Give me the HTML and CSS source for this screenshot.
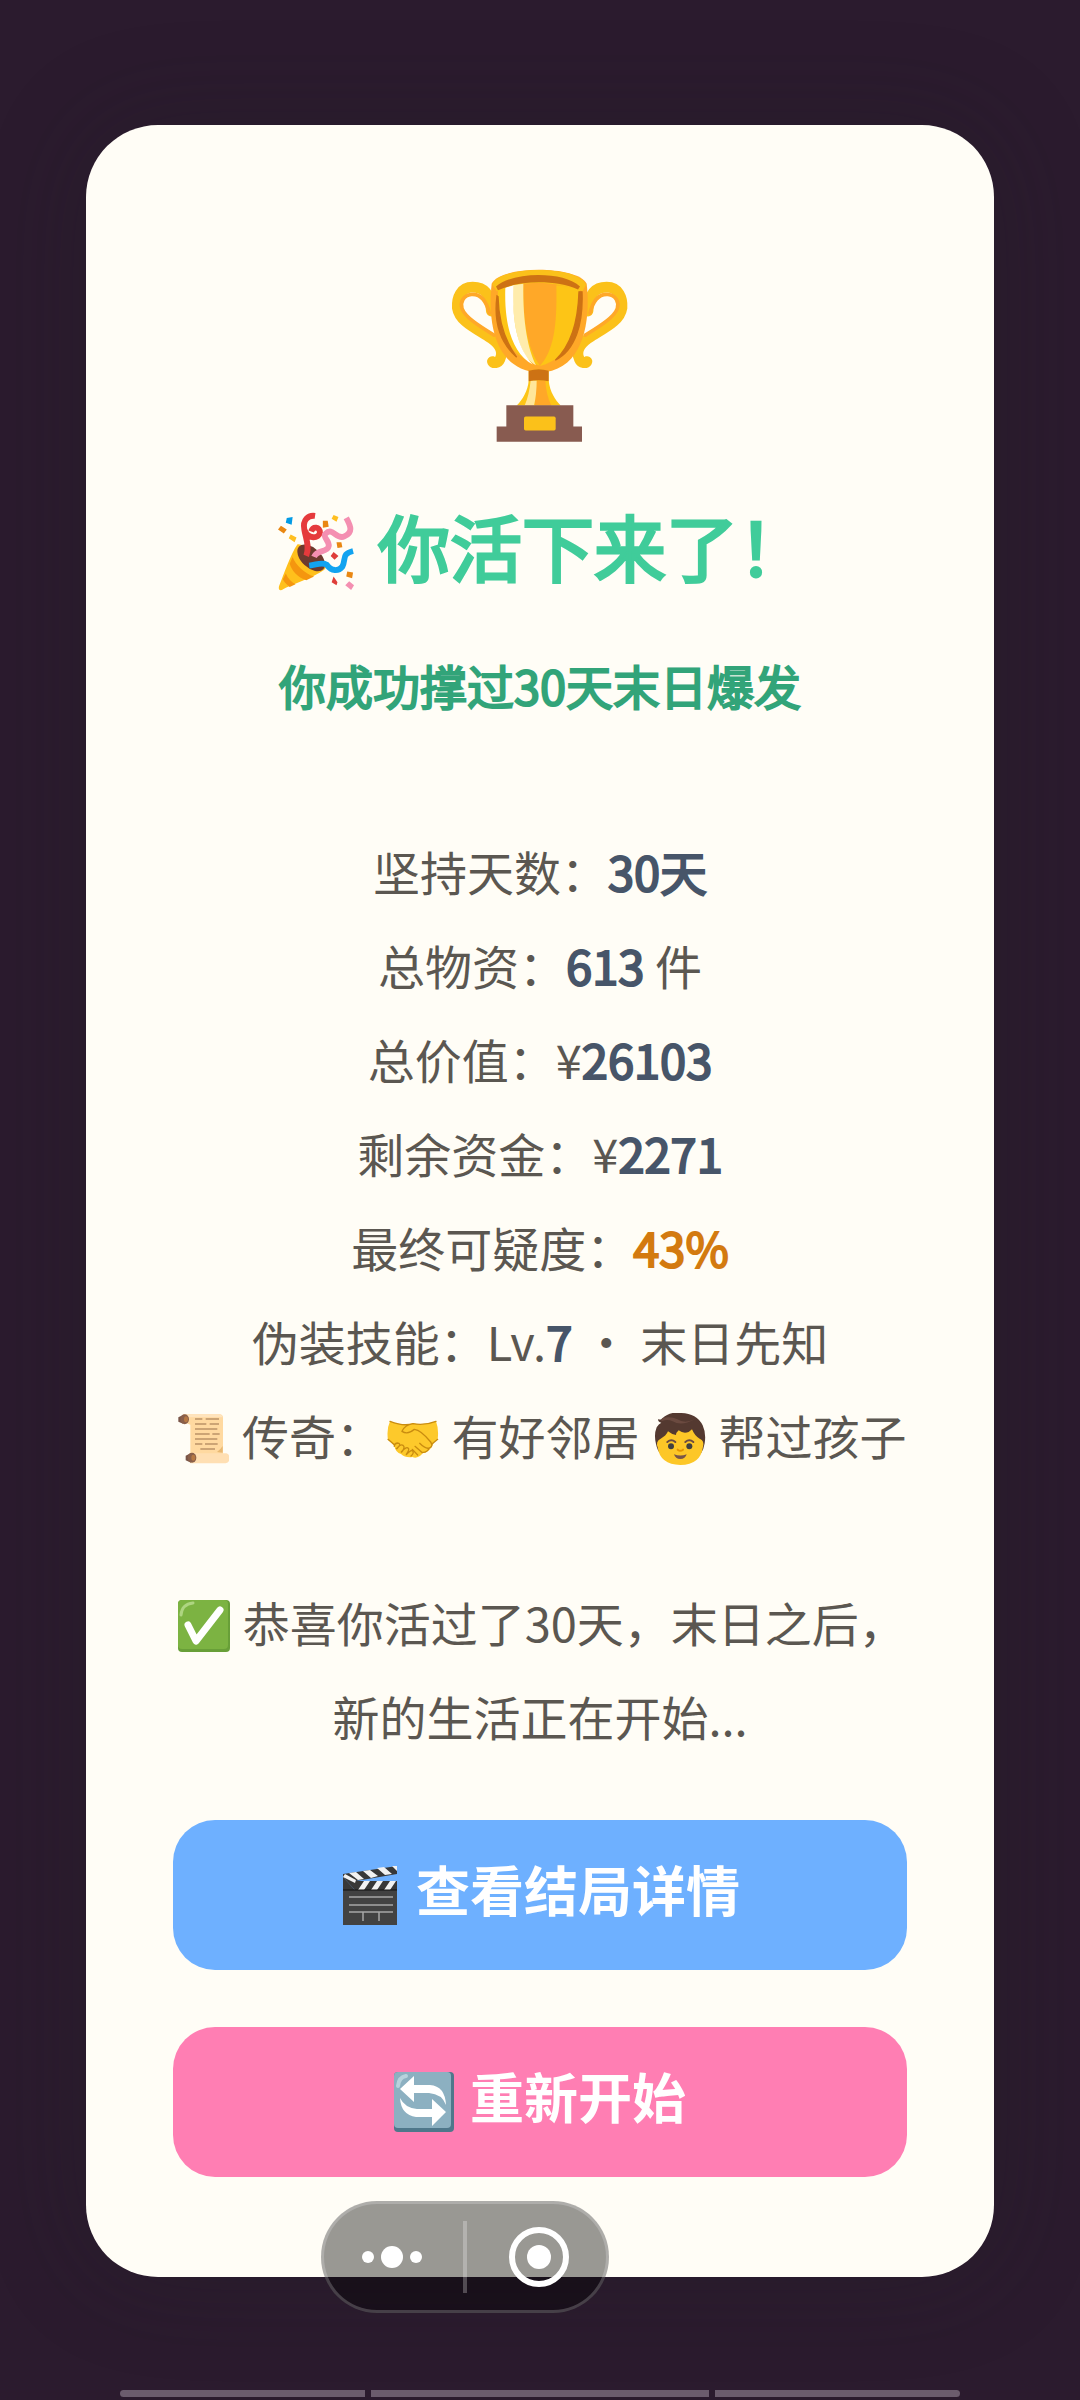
FILE: index.html
```html
<!DOCTYPE html>
<html lang="zh-CN">
<head>
    <meta charset="UTF-8">
    <meta name="viewport" content="width=device-width, initial-scale=1.0">
    <title>你活下来了！</title>
    <link rel="stylesheet" href="styles.css">
</head>
<body>

    <main class="card">
        <!-- 奖杯 -->
        <svg class="trophy" viewBox="150 80 540 530" aria-hidden="true">
            <g fill="none" stroke-linecap="round">
                <path d="M274 212C272 160 252 140 218 140C182 140 170 172 172 202C178 240 220 260 262 286C296 306 312 332 300 356C294 370 280 368 277 363" stroke="#fbc11a" stroke-width="32"/>
                <path d="M564 212C566 160 586 140 620 140C656 140 668 172 666 202C660 240 618 260 576 286C542 306 526 332 538 356C544 370 558 368 561 363" stroke="#fbc11a" stroke-width="32"/>
                <path d="M268 218C258 178 238 160 214 162C190 164 180 186 186 204C196 232 244 260 282 284" stroke="#ffa828" stroke-width="11"/>
                <path d="M570 218C580 178 600 160 624 162C648 164 658 186 652 204C642 232 594 260 556 284" stroke="#ffa828" stroke-width="11"/>
            </g>
            <path d="M275 130C300 74 532 74 560 130C572 230 556 394 416 396C276 388 264 230 275 130Z" fill="#ffa828"/>
            <path d="M277 132C300 74 532 74 558 132L548 152C470 122 360 122 290 152Z" fill="#fbc11a"/>
            <path d="M294 146C345 128 480 126 540 148C546 270 510 350 422 376C326 350 288 270 294 146Z" fill="#fdc516"/>
            <path d="M370 130C400 126 440 126 469 132C472 260 460 330 420 376C385 330 368 250 370 130Z" fill="#ffa828"/>
            <path d="M338 134L370 130C368 250 385 330 408 374C360 350 336 260 338 134Z" fill="#ffecac"/>
            <path d="M316 142L340 134C336 250 352 320 398 372C340 340 312 260 316 142Z" fill="#fff"/>
            <path d="M288 138C340 92 492 92 540 138L534 147C470 118 360 118 294 149Z" fill="#cd7214"/>
            <path d="M291 166C280 250 304 310 350 350C322 312 296 256 294 168ZM537 154L546 154C550 250 526 330 466 359C510 318 534 250 537 154Z" fill="#cd7214" stroke="#cd7214" stroke-width="4"/>
            <path d="M386 392Q416 380 446 392L446 420C450 456 466 478 482 495H350C368 478 384 450 386 420Z" fill="#fdc516"/>
            <path d="M410 420H436Q438 462 454 495H404Z" fill="#ffa828"/>
            <path d="M392 420H410Q410 462 402 495H374Q388 462 392 420Z" fill="#ffe69a"/>
            <path d="M386 391Q416 381 446 391V422Q416 416 386 422Z" fill="#cd7214"/>
            <path d="M319 494H520V558H546V604H290V558H319Z" fill="#885b50"/>
            <rect x="372" y="528" width="95" height="42" rx="5" fill="#fbc11a"/>
        </svg>

        <h1 class="title">
            <svg class="popper" viewBox="0 0 80 80" aria-hidden="true">
                <path d="M20 32C28 31 50 49 49 56C48 62 12 74 4 79Q0 80 1 75C6 63 13 42 20 32Z" fill="#ffc01c"/>
                <path d="M15 45C18 53 27 62 37 65L29 69C20 66 14 59 12 52ZM8 62C10 67 14 71 18 73L12 76C8 73 6 70 5 68Z" fill="#f5960f"/>
                <ellipse cx="34" cy="46" rx="17" ry="10" transform="rotate(43 34 46)" fill="#6d3a2e"/>
                <path d="M29 44C33 34 28 25 27 17C25 7 31 2 38 3M27 17C31 28 42 26 43 20C43 14 36 13 34 19" fill="none" stroke="#e53a3c" stroke-width="6"/>
                <path d="M37 45C40 37 51 41 52 34C53 28 45 25 49 21C56 14 60 28 68 24C77 20 75 14 70 5" fill="none" stroke="#f48fb1" stroke-width="6"/>
                <path d="M32 54C40 53 45 50 50 53C55 60 62 60 66 55C70 47 65 42 77 39" fill="none" stroke="#12a3f0" stroke-width="6"/>
                <path d="M9 5L15 4L14 12L8 10Z" fill="#039be5"/>
                <path d="M3 13L9 17L6 21L0 17ZM46 8L51 8L52 14L46 15ZM60 30L65 30L66 35L61 36ZM71 60L77 61L76 67L70 65Z" fill="#e98712"/>
                <path d="M13 22L19 25L17 30L11 26ZM57 2L62 4L60 9L55 6Z" fill="#ffbf20"/>
                <path d="M57 40L62 44L58 48L54 44ZM57 65L61 71L60 74L55 71Z" fill="#df3e39"/>
                <path d="M73 70L78 74L75 79L69 74Z" fill="#f48fb1"/>
            </svg>
            你活下来了！
        </h1>

        <p class="subtitle">你成功撑过30天末日爆发</p>

        <div class="stats">
            <p>坚持天数：<strong>30天</strong></p>
            <p>总物资：<strong>613</strong> 件</p>
            <p>总价值：¥<strong>26103</strong></p>
            <p>剩余资金：¥<strong>2271</strong></p>
            <p>最终可疑度：<strong class="warn">43%</strong></p>
            <p>伪装技能：Lv.<strong>7</strong> ・ 末日先知</p>
            <p>
                <svg class="emoji" viewBox="50 53 156 156" aria-hidden="true">
                    <path d="M68 57H178Q188 57 188 68V176H90V88Q82 84 68 84Z" fill="#ffd9a0"/>
                    <path d="M78 57H176Q186 58 186 66H84Z" fill="#ffe4bd"/>
                    <path d="M86 174H198Q208 176 208 189Q207 203 196 204H90Z" fill="#ffdfb3"/>
                    <path d="M170 170Q180 163 187 152V172Z" fill="#e8b873"/>
                    <path d="M104 71H126M136 71H176M104 86H138M148 86H176M104 101H171M104 116H148M156 116H178M104 131H171M104 146H126M134 146H172M120 161H164" stroke="#bc9267" stroke-width="4"/>
                    <path d="M54 66L68 59V85L54 79Z" fill="#795548"/>
                    <ellipse cx="73" cy="72" rx="13" ry="15" fill="#8a5f49"/>
                    <ellipse cx="77" cy="72" rx="6" ry="9" fill="#b67843"/>
                    <path d="M76 181L92 173V202L76 195Z" fill="#795548"/>
                    <ellipse cx="95" cy="187" rx="13" ry="15" fill="#8a5f49"/>
                    <ellipse cx="99" cy="187" rx="6" ry="9" fill="#b67843"/>
                </svg>
                传奇：<svg class="emoji" viewBox="20 51 156 156" aria-hidden="true">
                    <path d="M29 76Q70 92 98 82Q130 90 167 76Q176 100 172 130Q160 136 155 151Q145 170 127 172Q112 190 96 183Q75 186 62 174Q46 170 42 150Q34 140 23 132Q18 100 29 76Z" fill="#fdc92b"/>
                    <g fill="none" stroke="#c98c10" stroke-width="4" stroke-linecap="round">
                        <path d="M29 76Q70 92 98 83Q130 90 167 76M98 83Q72 88 65 106Q82 118 102 100Q122 102 151 138Q160 151 147 156Q136 160 118 142M104 151L126 170M96 160L112 177M147 156Q140 170 127 169"/>
                        <path d="M42 151Q41 143 51 141Q62 142 56 151L48 158M50 158Q61 143 68 148Q76 154 64 168M63 168Q78 150 84 157Q88 161 78 175M78 176Q94 158 98 166Q101 172 92 180M23 130L42 146M172 130L155 144"/>
                    </g>
                </svg>
                有好邻居
                <svg class="emoji" viewBox="38 51 156 156" aria-hidden="true">
                    <path d="M50 69Q56 73 62 68Q85 46 115 51Q165 50 184 88Q195 112 190 142Q187 162 178 174H58Q48 164 44 144Q37 116 46 94Q52 84 60 80Q50 79 50 69Z" fill="#543930"/>
                    <path d="M62 66Q90 60 108 70Q130 84 160 70Q120 92 94 76Q78 68 60 76Z" fill="#6b4a40"/>
                    <path d="M58 128Q74 120 80 106Q92 116 104 117Q104 110 112 103Q126 114 142 108L152 100Q160 120 175 128Q190 134 185 152Q178 206 117 207Q56 206 49 154Q42 136 58 128Z" fill="#fdc727"/>
                    <path d="M78 138Q90 128 102 138M132 138Q144 128 156 138" fill="none" stroke="#6d4c41" stroke-width="6" stroke-linecap="round"/>
                    <circle cx="89" cy="151" r="9" fill="#404040"/>
                    <circle cx="144" cy="151" r="9" fill="#404040"/>
                    <path d="M109 161Q117 168 125 161" fill="none" stroke="#e59600" stroke-width="6" stroke-linecap="round"/>
                    <path d="M98 175Q117 182 136 175Q132 189 117 189Q102 189 98 175Z" fill="#795548"/>
                </svg>
                帮过孩子
            </p>
            <p class="ending">
                <svg class="emoji" viewBox="0 0 52 52" aria-hidden="true">
                    <rect width="52" height="52" rx="4" fill="#689f38"/>
                    <rect width="50" height="49" rx="4" fill="#7cb342"/>
                    <path d="M3 15Q4 4 15 3" fill="none" stroke="#aed581" stroke-width="3" stroke-linecap="round"/>
                    <path d="M10 25L18 41L42 10" fill="none" stroke="#fff" stroke-width="7" stroke-linecap="round" stroke-linejoin="round"/>
                </svg>
                恭喜你活过了30天，末日之后，
            </p>
            <p>新的生活正在开始...</p>
        </div>

        <div class="actions">
            <button type="button" class="btn btn-detail">
                <svg viewBox="0 0 60 60" aria-hidden="true">
                    <path d="M3 25H57V60H3Z" fill="#424242"/>
                    <path d="M3 12L15 25H57V16H16L57 9V1L3 9Z" fill="#383838"/>
                    <path d="M3 12V25H15Z" fill="#383838"/>
                    <path d="M9 8L16 7L24 14L18 15ZM23 6L30 5L38 11L31 13ZM37 3L44 2L52 9L45 10ZM52 1H57V6ZM3 12L5 9L16 15L15 18ZM24 16H30L24 25H18ZM37 16H43L37 25H31ZM50 16H56L50 25H44Z" fill="#f2f2f2"/>
                    <path d="M3 25H57" stroke="#111" stroke-width="1"/>
                    <path d="M9 32H53M9 40H53M9 47H53M23 47V56M39 47V56" fill="none" stroke="#a6a6a6" stroke-width="1.5"/>
                </svg>
                <span>查看结局详情</span>
            </button>
            <button type="button" class="btn btn-restart">
                <svg viewBox="0 0 60 60" aria-hidden="true">
                    <rect width="60" height="60" rx="4" fill="#4f778b"/>
                    <rect width="57" height="56" rx="4" fill="#8cb0c1"/>
                    <path d="M4 14Q5 5 12 4" fill="none" stroke="#b8d2dd" stroke-width="4" stroke-linecap="round"/>
                    <path d="M6 17L20 4V13H36Q51 14 52 33Q48 22 35 21H20V30Z" fill="#fff"/>
                    <path d="M52 40L38 54V45H22Q7 43 6 26Q11 36 23 37H38V27Z" fill="#fff"/>
                </svg>
                <span>重新开始</span>
            </button>
        </div>
    </main>

    <!-- 悬浮胶囊按钮 -->
    <div class="capsule">
        <button type="button" class="more" aria-label="更多">
            <svg width="60" height="60" viewBox="0 0 60 60" fill="#fff">
                <circle cx="6" cy="30" r="6"/>
                <circle cx="30" cy="30" r="11"/>
                <circle cx="54" cy="30" r="6"/>
            </svg>
        </button>
        <i class="divider"></i>
        <button type="button" class="close" aria-label="关闭">
            <svg width="60" height="60" viewBox="0 0 60 60">
                <circle cx="30" cy="30" r="27" fill="none" stroke="#fff" stroke-width="6"/>
                <circle cx="30" cy="30" r="12" fill="#fff"/>
            </svg>
        </button>
    </div>

    <div class="nav-bars">
        <i></i><i class="wide"></i><i></i>
    </div>

</body>
</html>
```
FILE: styles.css
```css
* {
    box-sizing: border-box;
    margin: 0;
    padding: 0;
}
body {
    min-height: 100vh;
    padding: 125px 86px;
    background: #2b1b2e;
    font-family: "Noto Sans CJK SC", sans-serif;
    font-size: 47px;
    line-height: 94px;
    color: #5b5751;
    text-align: center;
}
.card {
    padding: 142px 84px 100px;
    border-radius: 72px;
    background: #fffdf6;
    box-shadow: 0 0 100px rgba(34, 32, 36, 0.3);
}
.trophy {
    display: block;
    width: 180px;
    height: 177px;
    margin: 0 auto;
}
.title {
    margin-top: 54px;
    font-size: 72px;
    font-weight: 400;
    color: #40cc9a;
    -webkit-text-stroke: 3px #40cc9a;
}
.title svg,
.emoji {
    -webkit-text-stroke: 0;
}
.popper {
    width: 78px;
    height: 80px;
    margin: 0 6px 0 8px;
    vertical-align: -16px;
}
.subtitle {
    margin-top: 46px;
    color: #32a479;
    -webkit-text-stroke: 2px #32a479;
}
.stats {
    margin-top: 92px;
    white-space: nowrap;
}
.stats strong {
    font-weight: 400;
    color: #475569;
    -webkit-text-stroke: 2px #475569;
}
.stats .warn {
    color: #d37a10;
    -webkit-text-stroke-color: #d37a10;
}
.stats .ending {
    margin-top: 93px;
}
.emoji {
    width: 52px;
    height: 52px;
    margin: 0 2px 0 4px;
    vertical-align: -10px;
}
.actions {
    display: flex;
    flex-direction: column;
    gap: 57px;
    margin: 57px 3px 0;
}
.btn {
    display: flex;
    align-items: center;
    justify-content: center;
    gap: 16px;
    height: 150px;
    border: none;
    border-radius: 42px;
    font-family: "Noto Sans CJK SC", cursive;
    font-size: 54px;
    font-weight: 700;
    line-height: 80px;
    color: #fff;
    cursor: pointer;
}
.btn svg {
    width: 60px;
    height: 60px;
}
.btn span {
    padding-bottom: 12px;
}
.btn-detail {
    background: #6eb0ff;
}
.btn-restart {
    background: #ff7eb3;
}
/* 悬浮在卡片上面 */
.capsule {
    position: fixed;
    left: 321px;
    bottom: 87px;
    display: flex;
    align-items: center;
    width: 288px;
    height: 112px;
    border: 3px solid rgba(255, 255, 255, 0.2);
    border-radius: 56px;
    background: rgba(0, 0, 0, 0.4);
}
.capsule button {
    display: flex;
    width: 139px;
    align-items: center;
    justify-content: center;
    border: none;
    background: none;
    cursor: pointer;
}
.capsule .more {
    padding-right: 4px;
}
.capsule .close {
    padding-left: 4px;
}
.divider {
    width: 4px;
    height: 72px;
    background: rgba(255, 255, 255, 0.25);
}
.nav-bars {
    position: fixed;
    left: 120px;
    right: 120px;
    bottom: 3px;
    display: flex;
    gap: 6px;
}
.nav-bars i {
    flex: 245;
    height: 7px;
    background: #6b5c6d;
}
.nav-bars .wide {
    flex: 338;
}
.nav-bars i:first-child {
    border-radius: 4px 0 0 4px;
}
.nav-bars i:last-child {
    border-radius: 0 4px 4px 0;
}
```
